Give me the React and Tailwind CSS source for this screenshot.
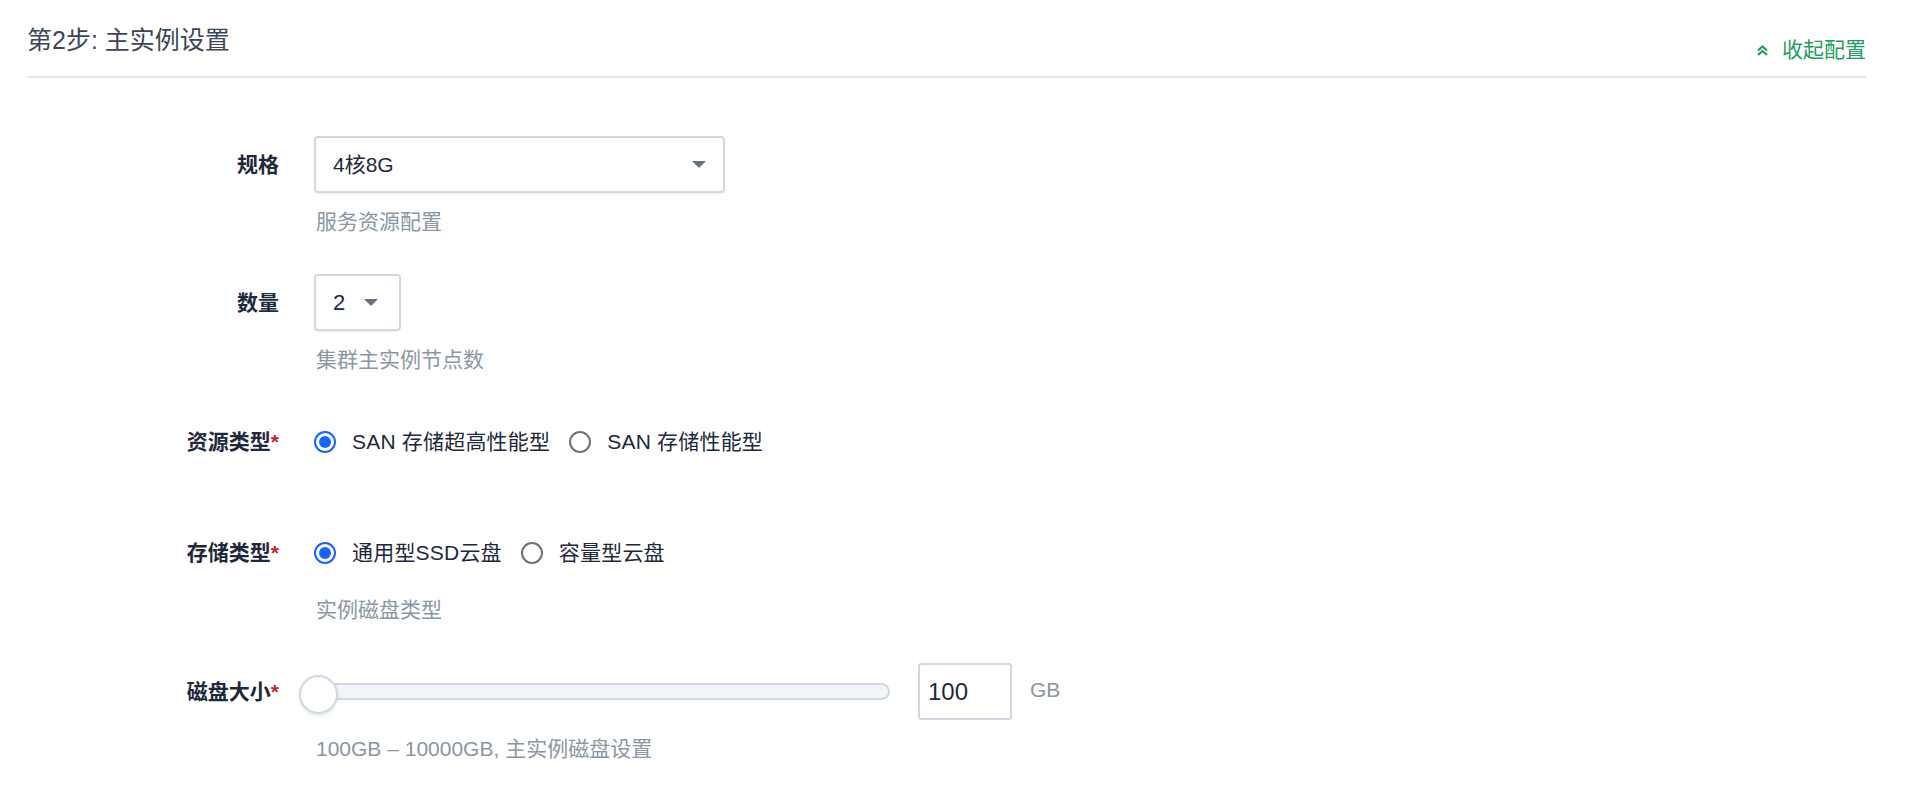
import { useState } from "react";

const FONT = { fontFamily: '"Liberation Sans", "Noto Sans CJK SC", sans-serif' };

function Caret() {
  return (
    <svg width="14" height="7" viewBox="0 0 14 7" className="shrink-0">
      <path d="M0 0h14L7 7z" fill="#66727f" />
    </svg>
  );
}

function Radio({ checked, label, onClick }) {
  return (
    <button type="button" onClick={onClick} className="flex items-center gap-4 text-[21px] text-[#1e293b]">
      {checked ? (
        <span className="flex h-[22px] w-[22px] items-center justify-center rounded-full border-2 border-[#1764ff]">
          <span className="h-[12px] w-[12px] rounded-full bg-[#1764ff]" />
        </span>
      ) : (
        <span className="h-[22px] w-[22px] rounded-full border-2 border-[#727272]" />
      )}
      <span className="tracking-[0.2px]">{label}</span>
    </button>
  );
}

function Row({ label, required, children, help, className = "" }) {
  return (
    <div className={className}>
      <div className="flex h-[57px] items-center">
        <div className="w-[252px] text-right text-[21px] font-bold text-[#1e293b]">
          {label}
          {required && <span className="text-[#c4262e]">*</span>}
        </div>
        <div className="ml-[35px] flex items-center">{children}</div>
      </div>
      {help && (
        <div className="ml-[289px] mt-[15px] text-[21px] leading-[28px] text-[#8a96a3]">{help}</div>
      )}
    </div>
  );
}

export default function App() {
  const [res, setRes] = useState(0);
  const [disk, setDisk] = useState(0);

  return (
    <div className="min-h-screen bg-white" style={FONT}>
      <div className="ml-[27px] mr-[54px]">
        <div className="flex h-[78px] items-start justify-between border-b-2 border-[#dfe6ee]">
          <h1 className="mt-[24px] text-[25px] leading-[32px] text-[#3b4756]">第2步: 主实例设置</h1>
          <button type="button" className="mt-[36px] flex items-center gap-[13px] text-[21px] leading-[28px] text-[#1f9d5e]">
            <svg width="13" height="11" viewBox="0 0 13 11" fill="none" stroke="#1f9d5e" strokeWidth="2.2">
              <path d="M2 5.5l4.5-4 4.5 4M2 10l4.5-4 4.5 4" />
            </svg>
            收起配置
          </button>
        </div>

        <div className="mt-[58px]">
          <Row label="规格" help="服务资源配置" className="mb-[38px]">
            <div className="flex h-[57px] w-[411px] items-center justify-between rounded-[4px] border-2 border-[#cfd8e3] pl-[17px] pr-[17px] text-[21px] text-[#1e293b] shadow-[0_1px_2px_rgba(15,23,42,0.08)]">
              <span>4核8G</span>
              <Caret />
            </div>
          </Row>

          <Row label="数量" help="集群主实例节点数" className="mb-[39px]">
            <div className="flex h-[57px] w-[87px] items-center gap-[19px] rounded-[4px] border-2 border-[#cfd8e3] pl-[17px] text-[22px] text-[#1e293b] shadow-[0_1px_2px_rgba(15,23,42,0.08)]">
              <span>2</span>
              <Caret />
            </div>
          </Row>

          <Row label="资源类型" required className="mb-[54px]">
            <div className="flex items-center gap-[19px]">
              <Radio checked={res === 0} label="SAN 存储超高性能型" onClick={() => setRes(0)} />
              <Radio checked={res === 1} label="SAN 存储性能型" onClick={() => setRes(1)} />
            </div>
          </Row>

          <Row label="存储类型" required help="实例磁盘类型" className="mb-[39px]">
            <div className="flex items-center gap-[19px]">
              <Radio checked={disk === 0} label="通用型SSD云盘" onClick={() => setDisk(0)} />
              <Radio checked={disk === 1} label="容量型云盘" onClick={() => setDisk(1)} />
            </div>
          </Row>

          <Row label="磁盘大小" required help="100GB – 10000GB, 主实例磁盘设置">
            <div className="relative flex h-[57px] w-[576px] items-center">
              <div className="h-[17px] w-full rounded-full border-2 border-[#cfd8e3] bg-[#f1f5f9]" />
              <div className="absolute left-[-15px] top-[12px] h-[39px] w-[39px] rounded-full border-2 border-[#cfd8e3] bg-white shadow-[0_2px_3px_rgba(31,157,94,0.15)]" />
            </div>
            <div className="ml-[28px] flex h-[57px] w-[94px] items-center rounded-[3px] border-2 border-[#cfd8e3] pl-[8px] text-[24px] text-[#1e293b]">
              100
            </div>
            <span className="ml-[18px] -mt-[3px] text-[21px] text-[#8a96a3]">GB</span>
          </Row>
        </div>
      </div>
    </div>
  );
}
